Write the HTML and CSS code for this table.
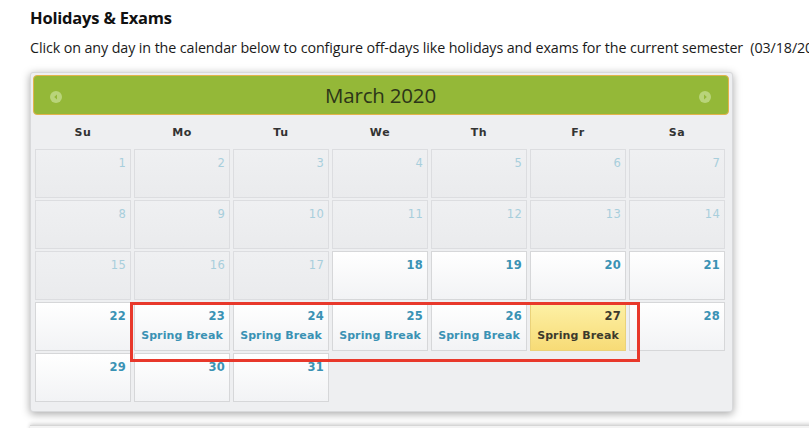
FILE: index.html
```html
<!DOCTYPE html>
<html>
<head>
<meta charset="utf-8">
<link rel="stylesheet" href="styles.css">
</head>
<body>
<h2 class="title">Holidays &amp; Exams</h2>
<p class="intro">Click on any day in the calendar below to configure off-days like holidays and exams for the current semester&nbsp; (03/18/2020 - 05/31/2020)</p>
<div class="calendar">
  <div class="cal-header">
    <span class="nav-btn prev"><svg width="12" height="12" viewBox="0 0 12 12"><circle cx="6" cy="6" r="6" fill="#b9d47a"/><path d="M7 3.5 L4.2 6 L7 8.5 Z" fill="#94b838"/></svg></span>
    <span class="month">March 2020</span>
    <span class="nav-btn next"><svg width="12" height="12" viewBox="0 0 12 12"><circle cx="6" cy="6" r="6" fill="#b9d47a"/><path d="M5 3.5 L7.8 6 L5 8.5 Z" fill="#94b838"/></svg></span>
  </div>
  <div class="weekdays">
    <span>Su</span><span>Mo</span><span>Tu</span><span>We</span><span>Th</span><span>Fr</span><span>Sa</span>
  </div>
  <div class="grid">
    <div class="cell past"><span class="num">1</span></div>
    <div class="cell past"><span class="num">2</span></div>
    <div class="cell past"><span class="num">3</span></div>
    <div class="cell past"><span class="num">4</span></div>
    <div class="cell past"><span class="num">5</span></div>
    <div class="cell past"><span class="num">6</span></div>
    <div class="cell past"><span class="num">7</span></div>
    <div class="cell past"><span class="num">8</span></div>
    <div class="cell past"><span class="num">9</span></div>
    <div class="cell past"><span class="num">10</span></div>
    <div class="cell past"><span class="num">11</span></div>
    <div class="cell past"><span class="num">12</span></div>
    <div class="cell past"><span class="num">13</span></div>
    <div class="cell past"><span class="num">14</span></div>
    <div class="cell past"><span class="num">15</span></div>
    <div class="cell past"><span class="num">16</span></div>
    <div class="cell past"><span class="num">17</span></div>
    <div class="cell"><span class="num">18</span></div>
    <div class="cell"><span class="num">19</span></div>
    <div class="cell"><span class="num">20</span></div>
    <div class="cell"><span class="num">21</span></div>
    <div class="cell"><span class="num">22</span></div>
    <div class="cell"><span class="num">23</span><span class="event">Spring Break</span></div>
    <div class="cell"><span class="num">24</span><span class="event">Spring Break</span></div>
    <div class="cell"><span class="num">25</span><span class="event">Spring Break</span></div>
    <div class="cell"><span class="num">26</span><span class="event">Spring Break</span></div>
    <div class="cell today"><span class="num">27</span><span class="event">Spring Break</span></div>
    <div class="cell"><span class="num">28</span></div>
    <div class="cell"><span class="num">29</span></div>
    <div class="cell"><span class="num">30</span></div>
    <div class="cell"><span class="num">31</span></div>
  </div>
  <div class="highlight"></div>
</div>
<div class="next-panel"></div>
</body>
</html>
```

FILE: styles.css
```css
html, body {
  margin: 0;
  padding: 0;
  background: #fff;
  overflow: hidden;
}
body {
  font-family: "Open Sans", "Liberation Sans", sans-serif;
  color: #111;
  width: 809px;
  height: 428px;
  position: relative;
}
.title {
  margin: 0;
  padding: 8px 0 0 30px;
  font-size: 16.5px;
  font-weight: 700;
  line-height: 20px;
  color: #111;
  letter-spacing: -0.2px;
}
.intro {
  margin: 10px 0 0 30px;
  font-size: 14.3px;
  line-height: 20px;
  white-space: nowrap;
  overflow: hidden;
  width: 779px;
  color: #1a1a1a;
  letter-spacing: -0.1px;
}
.calendar {
  position: relative;
  margin: 14px 0 0 30px;
  width: 697px;
  height: 334px;
  padding: 2px;
  border: 1px solid #d8d9db;
  border-radius: 3px;
  background: #eeeff1;
  box-shadow: 0 2px 8px rgba(0, 0, 0, 0.35);
}
.cal-header {
  height: 38px;
  background: #94b838;
  border: 1px solid #e3b34c;
  border-radius: 4px;
  display: flex;
  align-items: center;
  justify-content: space-between;
  padding: 0 17px 0 16px;
  width: 661px;
}
.nav-btn {
  display: flex;
  width: 12px;
  height: 12px;
  margin-top: 4px;
}
.month {
  font-family: "Open Sans", "Liberation Sans", sans-serif;
  font-size: 20.5px;
  color: #2c3519;
  letter-spacing: -0.2px;
}
.weekdays {
  display: grid;
  grid-template-columns: repeat(7, 96px);
  column-gap: 3px;
  margin-left: 2px;
  height: 34px;
  align-items: center;
}
.weekdays span {
  text-align: center;
  font-family: "DejaVu Sans", "Liberation Sans", sans-serif;
  font-size: 11px;
  font-weight: 700;
  color: #333;
  letter-spacing: 0.6px;
}
.grid {
  display: grid;
  grid-template-columns: repeat(7, 96px);
  grid-auto-rows: 49px;
  column-gap: 3px;
  row-gap: 2px;
  margin-left: 2px;
}
.cell {
  box-sizing: border-box;
  border: 1px solid #d6d7d9;
  background: linear-gradient(#ffffff, #f2f3f5);
  display: flex;
  flex-direction: column;
  align-items: stretch;
  font-family: "DejaVu Sans", "Liberation Sans", sans-serif;
  font-size: 11.5px;
  font-weight: 700;
  color: #3a92b4;
  letter-spacing: 0;
}
.cell .num {
  text-align: right;
  padding: 5px 4px 0 0;
  line-height: 16px;
  letter-spacing: 0.3px;
}
.cell .event {
  text-align: center;
  margin-top: 4px;
  line-height: 16px;
  font-size: 11px;
  letter-spacing: 0.1px;
}
.cell.past {
  background: linear-gradient(#eff0f2, #eaebed);
  border-color: #dcdde0;
  color: #a8cedc;
  font-weight: 400;
}
.cell.today {
  background: linear-gradient(#fdf1a6, #f7db76);
  border-color: #ead27a;
  color: #3c3a2c;
}
.highlight {
  position: absolute;
  left: 99px;
  top: 229px;
  width: 504px;
  height: 54px;
  border: 3px solid #e8382b;
  pointer-events: none;
}
.next-panel {
  position: absolute;
  left: 30px;
  top: 425px;
  width: 800px;
  height: 20px;
  border-top: 1px solid #d6d6d6;
  background: #f3f3f3;
  box-shadow: 0 -1px 4px rgba(0, 0, 0, 0.2);
}
```
